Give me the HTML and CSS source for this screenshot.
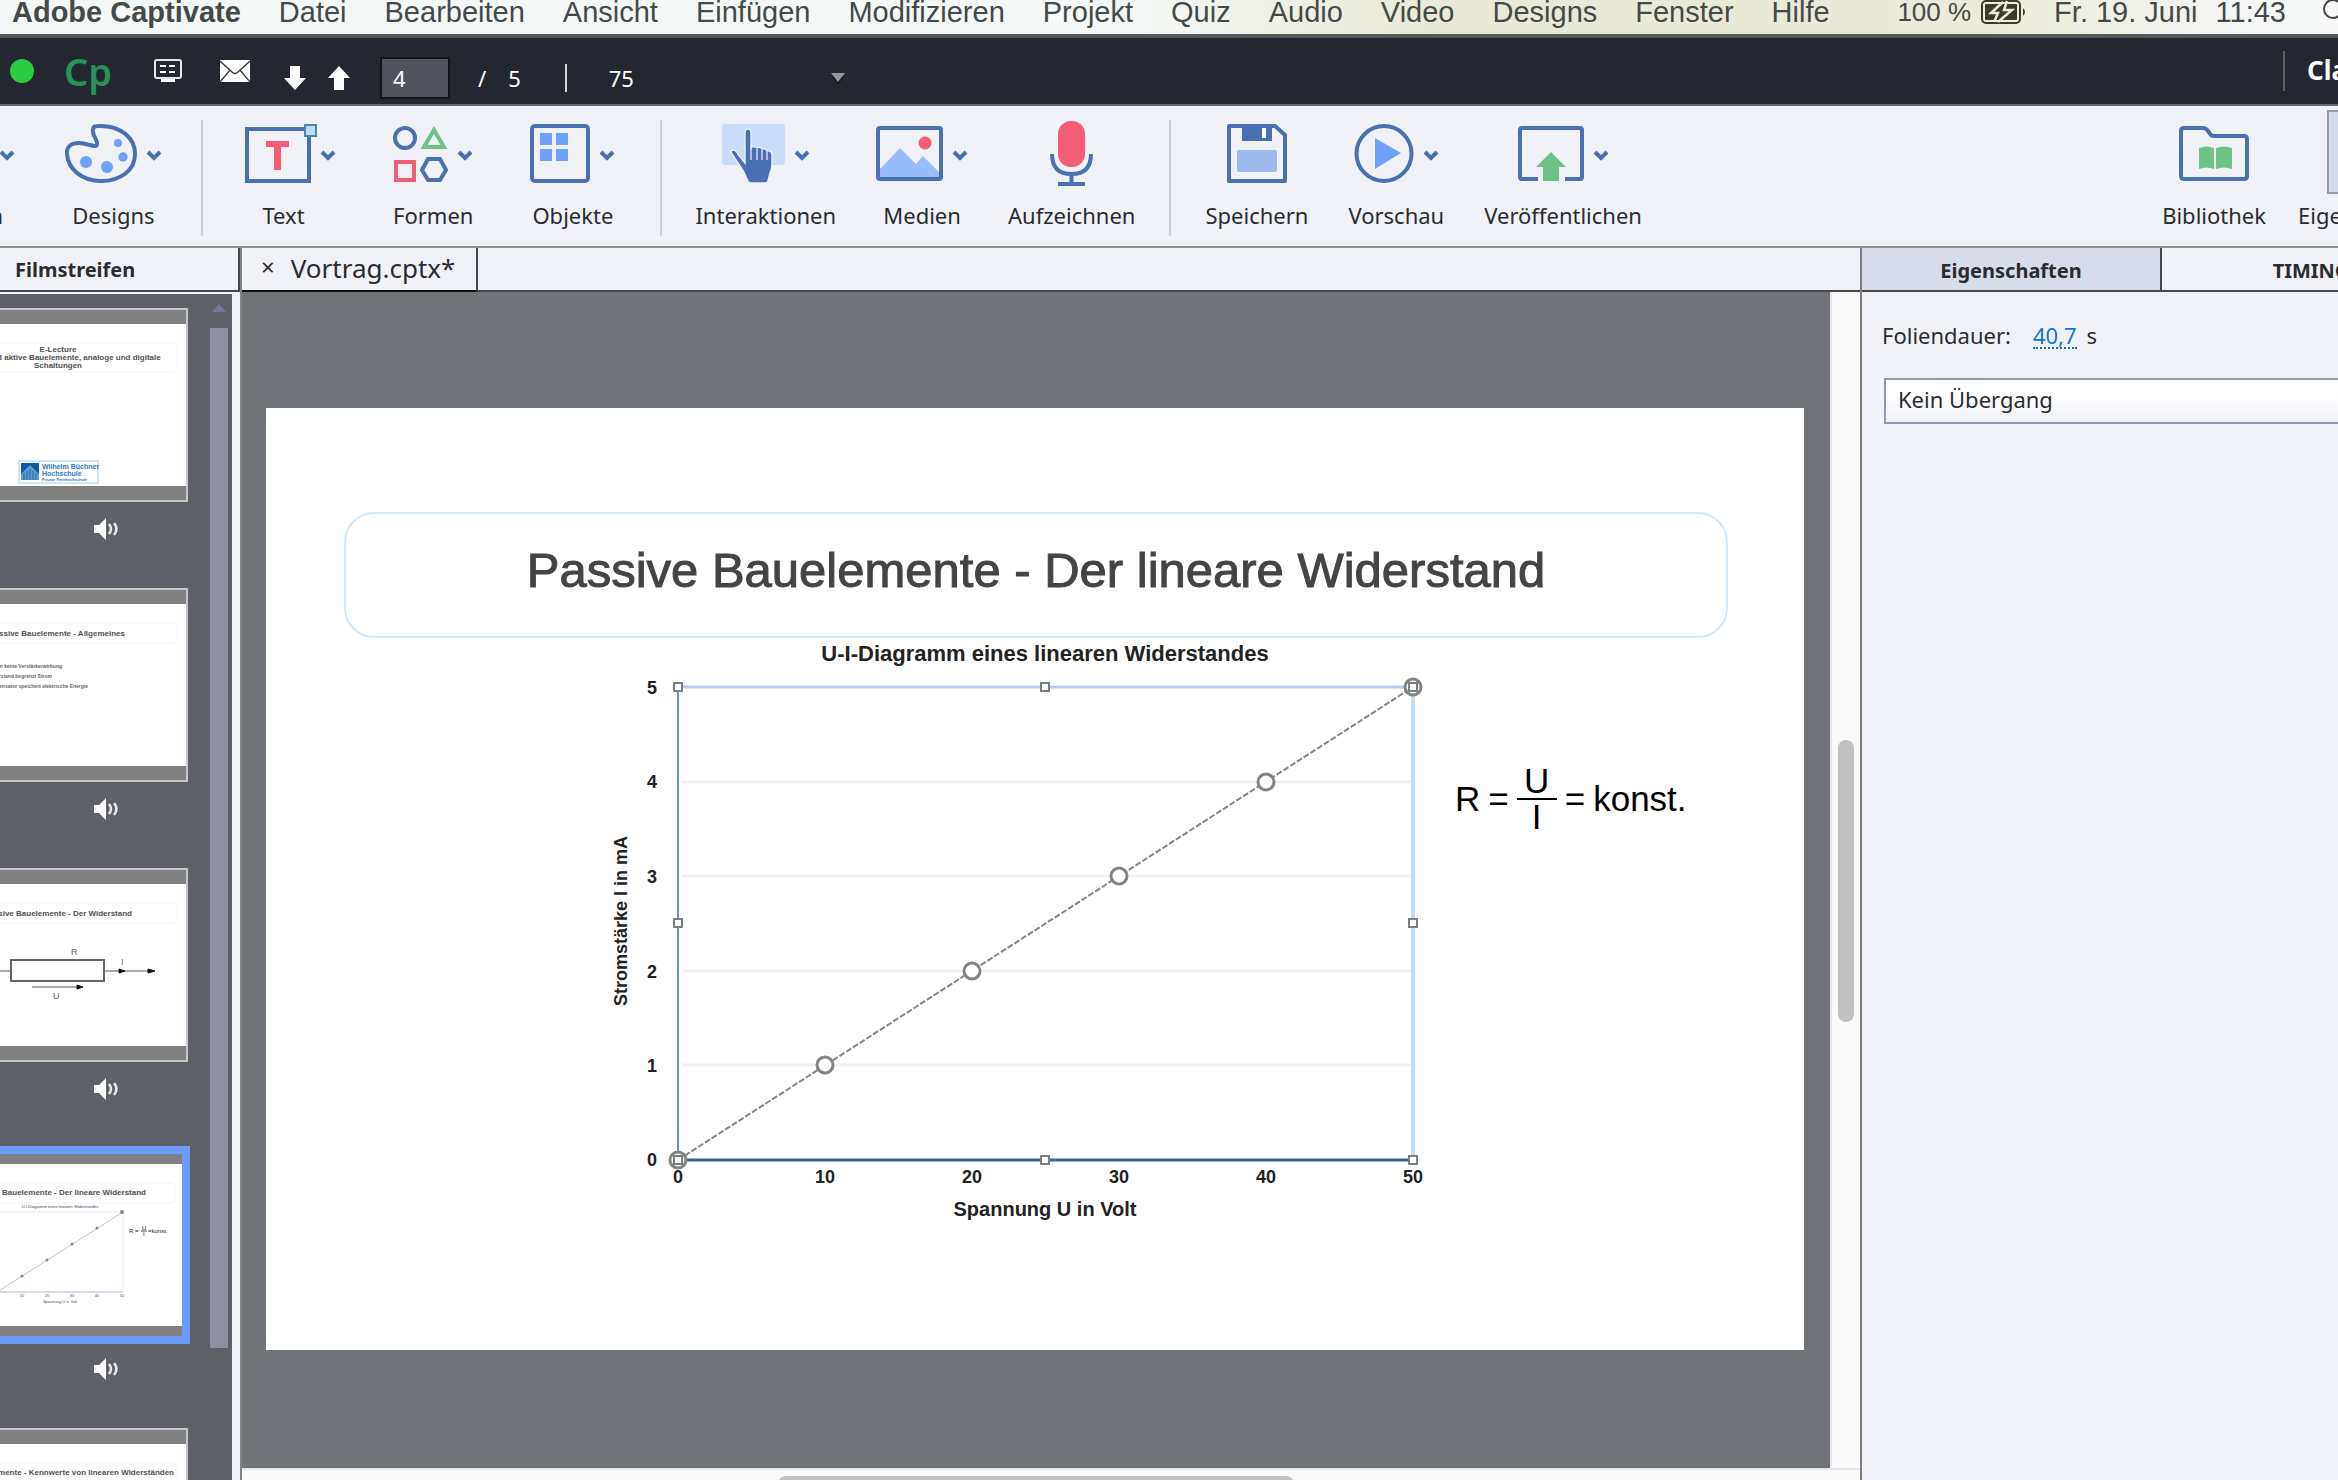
FILE: index.html
```html
<!DOCTYPE html>
<html lang="de">
<head>
<meta charset="utf-8">
<title>Adobe Captivate</title>
<link rel="stylesheet" href="styles.css">
</head>
<body>
<svg class="defs" aria-hidden="true">
  <symbol id="chevron" viewBox="0 0 16 12"><path d="M2 2l6 6 6-6" fill="none" stroke="#4a6fb3" stroke-width="4"/></symbol>
  <symbol id="speaker" viewBox="0 0 24 22"><path d="M0 7h5l7-7v22l-7-7H0z" fill="#fff"/><path d="M15 6q4 5 0 10M20 5q5 6 0 12" fill="none" stroke="#e8e8ea" stroke-width="2.5"/></symbol>
</svg>

<header>
  <nav class="menubar">
    <a class="app" href="#">Adobe Captivate</a>
    <a href="#">Datei</a>
    <a href="#">Bearbeiten</a>
    <a href="#">Ansicht</a>
    <a href="#">Einfügen</a>
    <a href="#">Modifizieren</a>
    <a href="#">Projekt</a>
    <a href="#">Quiz</a>
    <a href="#">Audio</a>
    <a href="#">Video</a>
    <a href="#">Designs</a>
    <a href="#">Fenster</a>
    <a href="#">Hilfe</a>
    <div class="status">
      <span class="charge">100 %</span>
      <svg width="46" height="24" viewBox="0 0 46 24"><rect x="1" y="1" width="38" height="22" rx="4" fill="none" stroke="#3c3a2c" stroke-width="2"/><rect x="4" y="4" width="32" height="16" rx="1" fill="#3c3a2c"/><path d="M42 8q4 4 0 8z" fill="#3c3a2c"/><path d="M22 2L10 13h7l-4 9M17 22L31 10h-8l3-9" fill="none" stroke="#ecebdc" stroke-width="2.500"/></svg>
      <span class="date">Fr. 19. Juni</span>
      <span>11:43</span>
      <svg class="search" width="16" height="24" viewBox="0 0 16 24"><circle cx="11" cy="9" r="9" fill="none" stroke="#444" stroke-width="2"/></svg>
    </div>
  </nav>

  <div class="appbar">
    <span class="light"></span>
    <span class="logo">Cp</span>
    <button class="plain monitor" aria-label="Layout"><svg width="30" height="24" viewBox="0 0 30 24"><rect x="2" y="1" width="26" height="18" rx="2" fill="none" stroke="#e6e6e8" stroke-width="2"/><path d="M7 7h6M16 7h6M7 13h6M16 13h6" stroke="#fff" stroke-width="2"/><path d="M8 20h14v3H8z" fill="#fff"/></svg></button>
    <button class="plain mail" aria-label="Nachricht"><svg width="30" height="22" viewBox="0 0 30 22"><path d="M0 0h30v22H0z" fill="#fff"/><path d="M0 1l12 11q3 3 6 0L30 1M0 22l10-12M30 22L20 10" fill="none" stroke="#33363d" stroke-width="1.3"/></svg></button>
    <button class="plain down" aria-label="Nächste Folie"><svg width="22" height="24" viewBox="0 0 22 24"><path d="M6 0h10v12h6L11 24 0 12h6z" fill="#fff"/></svg></button>
    <button class="plain up" aria-label="Vorherige Folie"><svg width="22" height="24" viewBox="0 0 22 24"><path d="M6 24h10V12h6L11 0 0 12h6z" fill="#fff"/></svg></button>
    <input class="page" aria-label="Folie" value="4">
    <span class="slash">/</span>
    <span class="total">5</span>
    <span class="rule"></span>
    <select class="zoom" aria-label="Zoom"><option>75</option></select>
    <svg class="caret" width="14" height="12" viewBox="0 0 14 12"><path d="M1 3h12L7 12z" fill="#14161a"/><path d="M0 0h14L7 9z" fill="#96979c"/></svg>
    <button class="plain workspace">Classic</button>
  </div>

  <div class="toolbar">
    <div class="group first">
      <button class="tool cut"><span class="art"><svg class="chev"><use href="#chevron"/></svg></span><span class="name">Folien</span></button>
      <button class="tool"><span class="art"><svg width="72" height="59" viewBox="0 0 72 59"><path d="M32 2C56 1 70 14 70 30C70 46 56 57 36 57C17 57 3 45 2 30C1 23 6 19 14 19C22 19 32 25 32 20C33 16 27 12 28 6C28 3 30 2 32 2Z" fill="none" stroke="#4a6fb3" stroke-width="4"/><g fill="#6fa0fb"><circle cx="21" cy="38" r="6"/><circle cx="42" cy="43" r="6"/><circle cx="58" cy="33" r="4.7"/><circle cx="53" cy="19" r="4"/></g></svg><svg class="chev"><use href="#chevron"/></svg></span><span class="name">Designs</span></button>
    </div>
    <div class="group insert">
      <button class="tool"><span class="art"><svg width="80" height="59" viewBox="0 0 80 59" overflow="visible"><rect x="16" y="5" width="62" height="52" fill="none" stroke="#4a6fb3" stroke-width="4"/><rect x="74" y="1" width="11" height="11" fill="#b9dcfb" stroke="#4d86a6" stroke-width="2"/><path d="M35 17h23v6H50v23h-7V23h-8z" fill="#f45d77"/></svg><svg class="chev"><use href="#chevron"/></svg></span><span class="name">Text</span></button>
      <button class="tool"><span class="art"><svg width="55" height="59" viewBox="0 0 55 59" fill="none" stroke-width="4"><circle cx="12" cy="14" r="10" stroke="#4a6fb3"/><path d="M41 6l10 17H31z" stroke="#6ec187"/><rect x="3" y="38" width="18" height="18" stroke="#f45d77"/><path d="M35 35h12l6 11-6 10H35l-6-10z" stroke="#4a6fb3"/></svg><svg class="chev"><use href="#chevron"/></svg></span><span class="name">Formen</span></button>
      <button class="tool"><span class="art"><svg width="60" height="59" viewBox="0 0 60 59"><rect x="2" y="2" width="56" height="55" rx="3" fill="none" stroke="#4a6fb3" stroke-width="4"/><path d="M10 9h12v12H10zM26 9h12v12H26zM10 25h12v12H10zM26 25h12v12H26z" fill="#6fa0fb"/></svg><svg class="chev"><use href="#chevron"/></svg></span><span class="name">Objekte</span></button>
    </div>
    <div class="group media">
      <button class="tool"><span class="art"><svg width="63" height="59" viewBox="0 0 63 59"><rect width="63" height="41" rx="3" fill="#cadcfb"/><path d="M23 9q0-4 3-4t3 4V24q2-3 6 0q3-2 5 1q4-1 5 2q4-1 5 3V40q0 5-2 9L46 57q-1 2-3 2H29q-3 0-4-4Q22 47 18 42L10 30q-2-4 1-4q3 0 5 4l7 9z" fill="#4a6fb3" stroke="#e7effc" stroke-width="1.5"/><path d="M29 24v12M35 25v11M40 26v10M45 27v9" stroke="#cfdcf2" stroke-width="1.5"/></svg><svg class="chev"><use href="#chevron"/></svg></span><span class="name">Interaktionen</span></button>
      <button class="tool"><span class="art"><svg width="67" height="55" viewBox="0 0 67 55"><path d="M3 44L24 22 40 38 47 30 64 47V52H3z" fill="#99bcfc"/><circle cx="49" cy="17" r="6.5" fill="#f45d77"/><rect x="2" y="2" width="63" height="51" rx="2" fill="none" stroke="#4a6fb3" stroke-width="4"/></svg><svg class="chev"><use href="#chevron"/></svg></span><span class="name">Medien</span></button>
      <button class="tool"><span class="art"><svg width="43" height="65" viewBox="0 0 43 65"><rect x="8" y="0" width="27" height="46" rx="13" fill="#f45d77"/><path d="M2 33q0 20 19.500 20T41 33M21.500 53v10M8 63h27" fill="none" stroke="#4a6fb3" stroke-width="4"/></svg></span><span class="name">Aufzeichnen</span></button>
    </div>
    <div class="group output">
      <button class="tool"><span class="art"><svg width="60" height="59" viewBox="0 0 60 59"><path d="M2 2H48L58 11V57H2z" fill="none" stroke="#4a6fb3" stroke-width="4" stroke-linejoin="round"/><path d="M15 2h30v15H15z" fill="#4a6fb3"/><path d="M35 4h4v10h-4z" fill="#fff"/><rect x="10" y="26" width="40" height="22" rx="2" fill="#a0b9ef"/></svg></span><span class="name">Speichern</span></button>
      <button class="tool"><span class="art"><svg width="60" height="59" viewBox="0 0 60 59"><circle cx="30" cy="29.500" r="27.500" fill="none" stroke="#4a6fb3" stroke-width="4"/><path d="M21 14L47 29 21 45z" fill="#6fa0fb"/></svg><svg class="chev"><use href="#chevron"/></svg></span><span class="name">Vorschau</span></button>
      <button class="tool"><span class="art"><svg width="66" height="55" viewBox="0 0 66 55"><path d="M20 53H4q-2 0-2-2V4q0-2 2-2H62q2 0 2 2V51q0 2-2 2H47" fill="none" stroke="#4a6fb3" stroke-width="4"/><path d="M33 26L48 41h-7v14H25V41H18z" fill="#6ec187"/></svg><svg class="chev"><use href="#chevron"/></svg></span><span class="name">Veröffentlichen</span></button>
    </div>
    <div class="group panels">
      <button class="tool"><span class="art"><svg width="70" height="55" viewBox="0 0 70 55"><path d="M5 2H24q3 0 5 3l3 4q1 1 3 1H65q3 0 3 3V50q0 3-3 3H5q-3 0-3-3V5q0-3 3-3z" fill="none" stroke="#4a6fb3" stroke-width="4"/><path d="M20 22q8-3 15 0V43q-7-3-15 0zM37 22q8-3 16 0V43q-8-3-16 0z" fill="#6ec187"/></svg></span><span class="name">Bibliothek</span></button>
      <button class="tool props"><span class="tile"></span><span class="name">Eigenschaften</span></button>
    </div>
  </div>
</header>

<main class="work">
  <aside class="film">
    <h2 class="film-head">Filmstreifen</h2>
    <div class="film-body">
      <div class="slides">
        <div class="item">
          <div class="thumb"><svg viewBox="0 0 264 162" width="264" height="162">
            <rect x="9" y="19" width="246" height="29" rx="5" fill="#fff" stroke="#eef6fb"/>
            <g class="tt" text-anchor="middle"><text x="136" y="28">E-Lecture</text><text x="136" y="36">Passive und aktive Bauelemente, analoge und digitale</text><text x="136" y="44">Schaltungen</text></g>
            <rect x="97" y="137" width="79" height="22" fill="#fff" stroke="#cfe4f5" stroke-width="2"/><rect x="99" y="139" width="18" height="17" fill="#0f5aa3"/><path d="M99 150l9-9 9 9v6H99z" fill="#5f9dcc"/><path d="M102 156v-7M105 156v-9M111 156v-9M114 156v-7M108 156v-11" stroke="#1f65a8"/>
            <g fill="#2f78b7" font-weight="700"><text x="120" y="145" font-size="7">Wilhelm Büchner</text><text x="120" y="152" font-size="7">Hochschule</text><text x="120" y="157" font-size="4">Private Fernhochschule</text></g>
          </svg></div>
          <svg class="snd"><use href="#speaker"/></svg>
        </div>
        <div class="item">
          <div class="thumb"><svg viewBox="0 0 264 162" width="264" height="162">
            <rect x="9" y="19" width="246" height="20" rx="5" fill="#fff" stroke="#eef6fb"/>
            <text class="tt" x="203" y="32" text-anchor="end">Passive Bauelemente - Allgemeines</text>
            <g class="ts" text-anchor="end"><text x="140" y="64">Bauelemente haben keine Verstärkerwirkung</text><text x="130" y="74">Widerstand begrenzt Strom</text><text x="166" y="84">Kondensator speichert elektrische Energie</text></g>
          </svg></div>
          <svg class="snd"><use href="#speaker"/></svg>
        </div>
        <div class="item">
          <div class="thumb"><svg viewBox="0 0 264 162" width="264" height="162">
            <rect x="9" y="19" width="246" height="20" rx="5" fill="#fff" stroke="#eef6fb"/>
            <text class="tt" x="210" y="32" text-anchor="end">Passive Bauelemente - Der Widerstand</text>
            <path d="M30 87H89M182 87H232M110 103H160" stroke="#555" fill="none"/><rect x="89" y="76" width="93" height="21" fill="#fff" stroke="#666" stroke-width="2"/><path d="M226 85l7 2-7 2zM197 85l6 2-6 2zM155 101l6 2-6 2z" fill="#111" stroke="#111"/>
            <g font-size="9" fill="#666"><text x="149" y="71">R</text><text x="199" y="81">I</text><text x="131" y="115">U</text></g>
          </svg></div>
          <svg class="snd"><use href="#speaker"/></svg>
        </div>
        <div class="item">
          <div class="thumb selected"><svg viewBox="0 0 264 162" width="264" height="162">
            <rect x="13" y="19" width="244" height="20" rx="5" fill="#fff" stroke="#eef6fb"/>
            <text class="tt" x="228" y="31" text-anchor="end">Passive Bauelemente - Der lineare Widerstand</text>
            <text x="142" y="44" font-size="4" fill="#444" text-anchor="middle">U-I-Diagramm eines linearen Widerstandes</text>
            <path d="M79 48H205V128" stroke="#e6ebfa" fill="none"/><path d="M79 128H205" stroke="#d3dce9" stroke-width="2"/><path d="M79 128L205 48" stroke="#c4c4c4" stroke-width="1"/>
            <g fill="#888"><circle cx="104" cy="112" r="1.500"/><circle cx="129" cy="96" r="1.500"/><circle cx="154" cy="80" r="1.500"/><circle cx="179" cy="64" r="1.500"/><circle cx="204" cy="48" r="2"/></g>
            <g font-size="4" fill="#555" text-anchor="middle"><text x="104" y="133">10</text><text x="129" y="133">20</text><text x="154" y="133">30</text><text x="179" y="133">40</text><text x="204" y="133">50</text><text x="142" y="139">Spannung U in Volt</text></g>
            <g font-size="6" fill="#222"><text x="211" y="69">R =</text><text x="224" y="66">U</text><text x="225" y="72">I</text><path d="M223 67h6" stroke="#444" stroke-width="1"/><text x="230" y="69">=konst.</text></g>
          </svg></div>
          <svg class="snd"><use href="#speaker"/></svg>
        </div>
        <div class="item">
          <div class="thumb"><svg viewBox="0 0 264 162" width="264" height="162">
            <rect x="9" y="19" width="246" height="20" rx="5" fill="#fff" stroke="#eef6fb"/>
            <text class="tt" x="252" y="31" text-anchor="end">Passive Bauelemente - Kennwerte von linearen Widerständen</text>
          </svg></div>
        </div>
      </div>
      <div class="film-scroll">
        <svg width="14" height="8" viewBox="0 0 14 8"><path d="M0 8L7 0l7 8z" fill="#74799a"/></svg>
        <span class="film-grip"></span>
      </div>
    </div>
  </aside>

  <section class="editor">
    <div class="tabs"><div class="tab"><button class="plain close" aria-label="Schließen">×</button><span>Vortrag.cptx*</span></div></div>
    <div class="view">
      <div class="stage">
        <article class="slide">
          <h1 class="title">Passive Bauelemente - Der lineare Widerstand</h1>
          <div class="content">
            <svg class="chart" viewBox="0 0 830 590" role="img" aria-label="U-I-Diagramm">
              <text x="445" y="21" font-size="22" text-anchor="middle">U-I-Diagramm eines linearen Widerstandes</text>
              <path d="M82 142H811M82 236H811M82 331H811M82 425H811" stroke="#f1f1f1" stroke-width="3"/>
              <path d="M78 47H813" stroke="#b7cbee" stroke-width="3"/>
              <path d="M813 47V520" stroke="#c3d9fa" stroke-width="4"/>
              <path d="M78 47V520" stroke="#6b8bc9" stroke-width="2"/>
              <path d="M78 520H813" stroke="#45618f" stroke-width="3"/>
              <path d="M78 520L813 47" stroke="#858585" stroke-width="2" stroke-dasharray="6 2"/>
              <g fill="#fff" stroke="#808583" stroke-width="3"><circle cx="78" cy="520" r="8"/><circle cx="225" cy="425" r="8"/><circle cx="372" cy="331" r="8"/><circle cx="519" cy="236" r="8"/><circle cx="666" cy="142" r="8"/><circle cx="813" cy="47" r="8"/></g>
              <g fill="#fff" stroke="#7c7f80" stroke-width="2"><path d="M74 43h8v8h-8zM441 43h8v8h-8zM809 43h8v8h-8zM74 279h8v8h-8zM809 279h8v8h-8zM74 516h8v8h-8zM441 516h8v8h-8zM809 516h8v8h-8z"/></g>
              <g font-size="18" text-anchor="middle"><text x="52" y="54">5</text><text x="52" y="148">4</text><text x="52" y="243">3</text><text x="52" y="338">2</text><text x="52" y="432">1</text><text x="52" y="526">0</text><text x="78" y="543">0</text><text x="225" y="543">10</text><text x="372" y="543">20</text><text x="519" y="543">30</text><text x="666" y="543">40</text><text x="813" y="543">50</text></g>
              <text x="445" y="576" font-size="20" text-anchor="middle">Spannung U in Volt</text>
              <text transform="translate(27 281) rotate(-90)" font-size="18" text-anchor="middle">Stromstärke I in mA</text>
            </svg>
            <div class="formula"><span>R</span><span class="eq">=</span><span class="frac"><span>U</span><span class="den">I</span></span><span class="eq">=</span><span>konst.</span></div>
          </div>
        </article>
      </div>
      <div class="vscroll"><span></span></div>
      <div class="hscroll"><span></span></div>
    </div>
  </section>

  <aside class="panel">
    <div class="panel-tabs"><button class="ptab on">Eigenschaften</button><button class="ptab">TIMING</button></div>
    <div class="fields">
      <div class="row"><span>Foliendauer:</span><a class="val" href="#">40,7</a><span>s</span></div>
      <select class="trans" aria-label="Übergang"><option>Kein Übergang</option></select>
    </div>
  </aside>
</main>
</body>
</html>
```
FILE: styles.css
```css
* { box-sizing: border-box; }
body {
  margin: 0;
  height: 100vh;
  overflow: hidden;
  display: flex;
  flex-direction: column;
  background: #f1f2f8;
  color: #2a2c30;
  font: 22px/30px "Noto Sans", sans-serif;
}
.defs { display: none; }
button, input, select { font: inherit; color: inherit; }
.plain { border: 0; padding: 0; background: none; display: flex; }
svg { flex: none; }

/* system menu */
.menubar {
  display: flex;
  gap: 38px;
  height: 38px;
  padding-left: 12px;
  overflow: hidden;
  border-bottom: 4px solid #55595a;
  background: linear-gradient(90deg, #f4f8f7 0, #f4f8f7 48%, #e9e9d6 62%, #ebeadb 85%, #f6f8f8 97%);
  font: 29px/24px "Liberation Sans", sans-serif;
  white-space: nowrap;
}
.menubar a { color: #454949; text-decoration: none; }
.menubar .app { font-weight: 700; }
.status { display: flex; margin-left: auto; color: #454949; }
.charge { font-size: 26px; margin-right: 10px; }
.date { margin: 0 18px 0 27px; }
.search { margin-left: 36px; }

/* dark application bar */
.appbar {
  display: flex;
  align-items: center;
  height: 68px;
  padding-left: 10px;
  background: #242730;
  border-bottom: 2px solid #66686d;
  color: #fff;
}
.light { width: 24px; height: 24px; border-radius: 50%; background: #28cd41; }
.logo { margin-left: 30px; width: 48px; color: #27935a; font-size: 38px; font-weight: 600; line-height: 60px; }
.monitor { margin-left: 41px; }
.mail { margin-left: 37px; }
.down { margin: 14px 0 0 34px; }
.up { margin: 14px 0 0 22px; }
.page {
  width: 70px;
  height: 42px;
  margin: 14px 0 0 30px;
  padding: 0 0 0 11px;
  border: 2px solid #12141c;
  background: #50535c;
  color: #fff;
}
.slash { margin: 14px 0 0 28px; }
.total { margin: 14px 0 0 22px; }
.rule { width: 2px; height: 28px; margin: 14px 0 0 44px; background: #d6d6d8; }
.zoom { width: 222px; margin: 14px 0 0 42px; padding: 0; border: 0; background: none; appearance: none; color: #fff; }
.caret { margin-top: 16px; }
.workspace {
  width: 55px;
  height: 40px;
  margin-left: auto;
  padding-left: 22px;
  border-left: 2px solid #5d6067;
  font-size: 26px;
  font-weight: 700;
  line-height: 38px;
}

/* toolbar */
.toolbar { display: flex; height: 142px; padding-top: 14px; border-bottom: 2px solid #8c8e91; }
.group { display: flex; flex: none; align-self: flex-start; height: 116px; }
.group.first { gap: 50px; padding-right: 39px; border-right: 2px solid #cfd0d5; }
.group.insert { gap: 57px; padding: 0 45px 0 28px; border-right: 2px solid #cfd0d5; }
.group.media { gap: 40px; padding: 0 34px 0 33px; border-right: 2px solid #cfd0d5; }
.group.output { gap: 40px; padding-left: 34px; }
.group.panels { gap: 32px; margin-left: auto; }
.tool {
  display: flex;
  flex-direction: column;
  align-items: center;
  gap: 14px;
  padding: 0;
  border: 0;
  background: none;
  white-space: nowrap;
}
.art { display: flex; align-items: center; gap: 9px; height: 66px; }
.chev { width: 16px; height: 12px; margin-top: 6px; }
.cut { width: 15px; align-items: flex-end; }
.cut .name { padding-right: 12px; }
.props { width: 40px; align-items: flex-start; }
.tile { flex: none; width: 90px; height: 84px; margin: -10px 0 -8px 29px; border: 2px solid #939bb3; background: #d5dae8; }

/* work area */
.work { display: flex; flex: 1; min-height: 0; }
.film { display: flex; flex-direction: column; width: 242px; border-right: 2px solid #808285; }
.film-head {
  margin: 0 0 2px;
  height: 44px;
  padding: 2px 0 0 15px;
  border-right: 2px solid #46484d;
  border-bottom: 2px solid #46484d;
  font-size: 20px;
  line-height: 40px;
}
.film-body {
  display: flex;
  flex: 1;
  min-height: 0;
  margin-right: 8px;
  padding-right: 4px;
  overflow: hidden;
  background: #5d6067;
}
.slides { flex: 1; padding-top: 14px; }
.item { height: 280px; }
.thumb {
  display: flex;
  justify-content: flex-end;
  width: 188px;
  height: 194px;
  padding: 14px 0;
  overflow: hidden;
  border: 2px solid #c6c8c7;
  border-left: 0;
  background: #808080;
}
.thumb svg { background: #fff; }
.thumb.selected { padding: 10px 0; border: 6px solid #6b9bfb; border-left: 0; outline: 2px solid #6b9bfb; }
.thumb text { font-family: "Liberation Sans", sans-serif; }
.thumb .tt { font-size: 8px; font-weight: 700; fill: #505050; }
.thumb .ts { font-size: 5px; font-weight: 700; fill: #666; }
.snd { display: block; width: 24px; height: 22px; margin: 16px 0 0 94px; }
.film-scroll { display: flex; flex-direction: column; align-items: center; gap: 16px; width: 18px; padding: 10px 0 132px; }
.film-grip { flex: 1; width: 18px; background: #8e909f; }

.editor { display: flex; flex-direction: column; flex: 1; min-width: 0; }
.tabs { display: flex; height: 44px; border-bottom: 2px solid #46484d; }
.tab {
  display: flex;
  gap: 16px;
  width: 236px;
  height: 44px;
  padding-left: 19px;
  border-right: 2px solid #46484d;
  border-bottom: 2px solid #0c0e12;
  font-size: 26px;
  line-height: 40px;
}
.close { font-size: 24px; line-height: 38px; }
.view { display: grid; grid-template: 1fr 12px / 1fr 30px; flex: 1; min-height: 0; }
.stage { display: flex; align-items: center; padding: 0 26px 2px 24px; background: #707378; overflow: hidden; }
.slide { flex: 1; aspect-ratio: 1538 / 942; padding-top: 104px; background: #fff; font-family: "Liberation Sans", sans-serif; }
.title {
  margin: 0 76px 0 78px;
  height: 126px;
  border: 2px solid #d0e7fb;
  border-radius: 30px;
  color: #444;
  font-size: 49px;
  font-weight: 400;
  line-height: 112px;
  text-align: center;
  -webkit-text-stroke: 1px #444;
}
.content { display: flex; gap: 25px; padding-left: 334px; }
.chart { width: 830px; height: 590px; margin-top: 2px; }
.chart text { font-family: "Liberation Sans", sans-serif; font-weight: 700; fill: #222; }
.formula { display: flex; align-items: center; align-self: flex-start; margin-top: 126px; color: #000; font-size: 35px; line-height: 34px; }
.eq { margin: 0 8px; }
.frac { display: flex; flex-direction: column; align-items: center; width: 40px; }
.den { width: 40px; border-top: 2px solid #000; text-align: center; }

.vscroll { display: flex; justify-content: center; background: #fafafa; border-left: 2px solid #e6e6e8; border-bottom: 2px solid #fafafa; }
.vscroll span { width: 16px; height: 282px; margin-top: 448px; border-radius: 8px; background: #c1c1c1; }
.hscroll { grid-column: 1 / 3; background: #fafafa; border-top: 2px solid #e6e6e8; padding-top: 6px; overflow: hidden; }
.hscroll span { display: block; width: 516px; height: 16px; margin-left: 536px; border-radius: 8px; background: #c1c1c1; }

.panel { width: 478px; border-left: 2px solid #7b7d80; overflow: hidden; }
.panel-tabs { display: flex; height: 44px; border-bottom: 2px solid #46484d; }
.ptab {
  flex: 0 0 300px;
  padding: 4px 0 0;
  border: 0;
  border-right: 2px solid #46484d;
  background: none;
  font-size: 20px;
  font-weight: 700;
}
.ptab.on { background: #d8dce8; }
.fields { padding: 28px 0 0 20px; }
.row { display: flex; gap: 10px; }
.val { margin-left: 12px; color: #0a78d6; text-decoration: none; height: 29px; border-bottom: 2px dotted #0a6bc4; }
.trans {
  display: block;
  width: 100%;
  height: 46px;
  margin: 28px 0 0 2px;
  padding: 0 0 4px 12px;
  border: 2px solid #8f97ac;
  border-right: 0;
  background: linear-gradient(#fff 40%, #eff0f7);
  appearance: none;
}
```
